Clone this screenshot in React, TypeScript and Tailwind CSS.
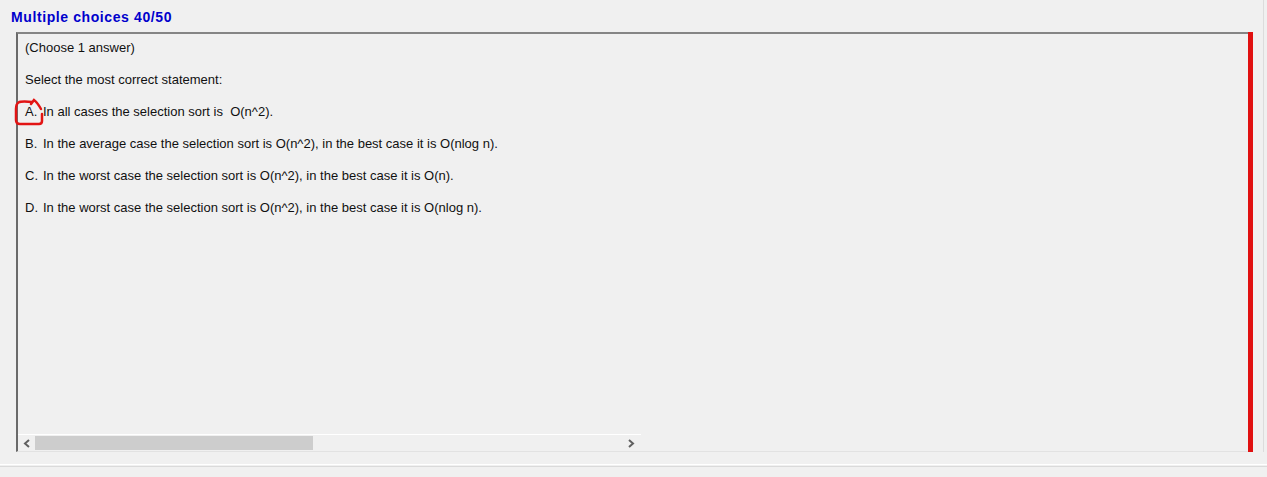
import React from "react";

const options = [
  { key: "A.", text: "In all cases the selection sort is  O(n^2)." },
  { key: "B.", text: "In the average case the selection sort is O(n^2), in the best case it is O(nlog n)." },
  { key: "C.", text: "In the worst case the selection sort is O(n^2), in the best case it is O(n)." },
  { key: "D.", text: "In the worst case the selection sort is O(n^2), in the best case it is O(nlog n)." },
];

function Chevron({ dir }: { dir: "left" | "right" }) {
  return (
    <svg width="8" height="9" viewBox="0 0 8 9">
      {dir === "left" ? (
        <polyline points="6,1 2,4.5 6,8" fill="none" stroke="#606060" strokeWidth="2" />
      ) : (
        <polyline points="2,1 6,4.5 2,8" fill="none" stroke="#606060" strokeWidth="2" />
      )}
    </svg>
  );
}

function HScrollbar() {
  return (
    <div className="flex h-[17px] w-[623px] border-t border-white bg-[#f0f0f0]">
      <div className="flex w-[17px] items-center justify-center">
        <Chevron dir="left" />
      </div>
      <div className="flex flex-1 py-[1px]">
        <div className="w-[278px] bg-[#cdcdcd]" />
      </div>
      <div className="flex w-[17px] items-center pl-[3px]">
        <Chevron dir="right" />
      </div>
    </div>
  );
}

export default function App() {
  return (
    <div
      className="relative h-[477px] w-[1267px] overflow-hidden bg-[#f0f0f0] text-[#111]"
      style={{ fontFamily: '"Liberation Sans", Arial, sans-serif' }}
    >
      <div className="flex">
        <div className="flex w-[1253px] flex-col">
          <div className="flex h-[32px] items-center pl-[11px] pt-[2px] text-[14px] font-bold tracking-[0.6px] text-[#0000cc]">
            Multiple choices 40/50
          </div>
          <div className="flex pl-[16px]">
            <div className="flex h-[420px] w-[1232px] flex-col border-t-2 border-l-2 border-b border-t-[#858585] border-l-[#6a6a6a] border-b-[#e2e2e2]">
              <div className="flex flex-col gap-4 pl-[7px] pt-[6px] text-[13px] leading-[16px]">
                <div>(Choose 1 answer)</div>
                <div>Select the most correct statement:</div>
                {options.map((o) => (
                  <div key={o.key} className="flex whitespace-pre">
                    <span className="w-[18px]">{o.key}</span>
                    <span>{o.text}</span>
                  </div>
                ))}
              </div>
              <div className="mt-auto">
                <HScrollbar />
              </div>
            </div>
            <div className="w-[5px] bg-[#e01010]" />
          </div>
        </div>
        <div className="w-[10px]" />
        <div className="w-[1px] bg-[#dcdcdc]" />
      </div>
      <div className="mt-[12px] h-[2px] border-t border-white bg-[#f0f0f0]" />
      <div className="h-[1px] bg-[#dadada]" />

      <svg
        className="pointer-events-none absolute left-0 top-0"
        width="1267"
        height="477"
        viewBox="0 0 1267 477"
      >
        <path
          d="M32 102 Q21 101 18.5 102.5 Q16 104 16 109 L16 120 Q16 124 20 124 L39 124 Q42 124 42 121 L42 114"
          fill="none"
          stroke="#e21414"
          strokeWidth="2.5"
          strokeLinecap="round"
        />
        <path
          d="M31 104 L34 100 Q37 102 41 109"
          fill="none"
          stroke="#e21414"
          strokeWidth="2.5"
          strokeLinecap="round"
        />
      </svg>
    </div>
  );
}
